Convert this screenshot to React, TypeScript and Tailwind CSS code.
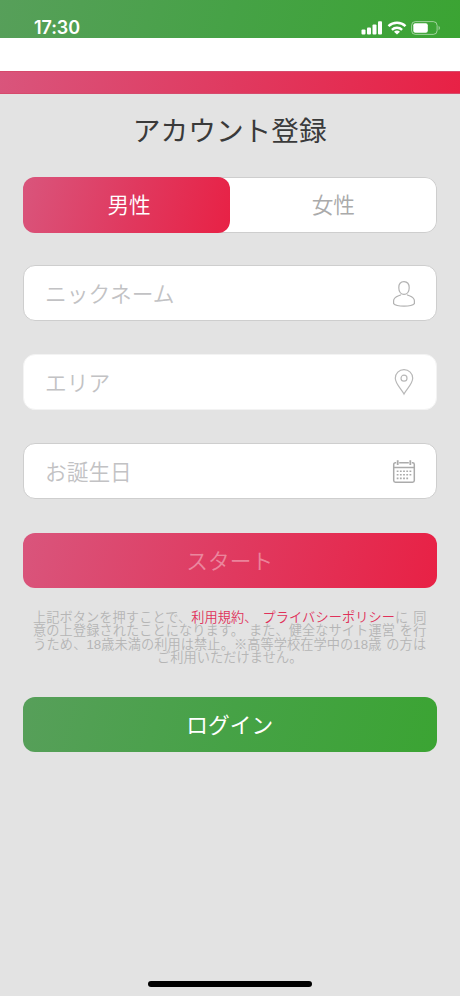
import { useState } from 'react'
import type { ReactNode } from 'react'
import clsx from 'clsx'

const pinkGradient = 'bg-[linear-gradient(105deg,#d9557c_0%,#e0395f_52%,#e82145_100%)]'
const greenGradient = 'bg-[linear-gradient(105deg,#579f5a_0%,#46a246_50%,#3ba433_100%)]'

function StatusBar() {
  return (
    <header className={clsx('flex h-[38px] justify-between pl-[34px] pr-[19px] text-white', greenGradient)}>
      <span className="pt-[18px] font-['Inter'] text-[18px] font-semibold leading-[20px] tracking-[-0.1px]">17:30</span>
      <div className="flex items-start gap-1 pt-[21px]">
        <svg width="22" height="14" viewBox="0 0 22 14" fill="currentColor">
          <rect x="0.5" y="8.5" width="4" height="5" rx="1" />
          <rect x="6" y="6.5" width="4" height="7" rx="1" />
          <rect x="11.5" y="3.5" width="4" height="10" rx="1" />
          <rect x="17" y="0.3" width="4" height="13.2" rx="1" />
        </svg>
        <svg width="20" height="14" viewBox="0 0 20 14" fill="none" stroke="currentColor" strokeWidth="2.5">
          <path d="M1.5 5.2C6.2 0.7 13.8 0.7 18.5 5.2" />
          <path d="M4.9 8.8C7.8 6.1 12.2 6.1 15.1 8.8" />
          <path d="M10 13.5L7 10.7C8.7 9.2 11.3 9.2 13 10.7Z" fill="currentColor" stroke="none" />
        </svg>
        <svg width="30" height="14" viewBox="0 0 30 14">
          <rect x="0.6" y="0.6" width="25.5" height="12.8" rx="3.8" fill="none" stroke="#fff" strokeOpacity="0.5" />
          <rect x="2.3" y="2.2" width="14.5" height="9.6" rx="2" fill="#fff" />
          <path d="M27.6 4.8C29.3 5.6 29.3 8.4 27.6 9.2Z" fill="#fff" fillOpacity="0.55" />
        </svg>
      </div>
    </header>
  )
}

function UserIcon() {
  return (
    <svg className="mt-px" width="24" height="28" viewBox="0 0 24 28" fill="none" stroke="#b2b2b2" strokeWidth="1.2">
      <path d="M12 1.6C8.6 1.6 6.8 4.2 6.8 7.7C6.8 11.4 8.8 14.4 12 14.4C15.2 14.4 17.2 11.4 17.2 7.7C17.2 4.2 15.4 1.6 12 1.6Z" />
      <path d="M8.9 14.8C6.6 16.2 1.6 16.4 1.6 20.8V23.6C4.5 26.9 19.5 26.9 22.4 23.6V20.8C22.4 16.4 17.4 16.2 15.1 14.8" />
    </svg>
  )
}

function PinIcon() {
  return (
    <svg width="24" height="28" viewBox="0 0 24 28" fill="none" stroke="#b8b8b8" strokeWidth="1.2">
      <path d="M12 26C9.8 21.4 3.3 15.8 3.3 10.2C3.3 5.4 7.1 1.6 12 1.6C16.9 1.6 20.7 5.4 20.7 10.2C20.7 15.8 14.2 21.4 12 26Z" />
      <circle cx="12" cy="10.2" r="3" />
    </svg>
  )
}

function CalendarIcon() {
  return (
    <svg className="mt-px" width="24" height="28" viewBox="0 0 24 28" fill="none" stroke="#ababab" strokeWidth="1.5">
      <path d="M4.2 4.8H3.4C2.3 4.8 1.7 5.4 1.7 6.4V22.6C1.7 23.6 2.3 24.3 3.4 24.3H20.6C21.7 24.3 22.3 23.6 22.3 22.6V6.4C22.3 5.4 21.7 4.8 20.6 4.8H19.8M7.2 4.8H16.8M1.7 9.4H22.3" />
      <path d="M5.7 2.2V7M18.3 2.2V7" strokeWidth="1.8" />
      <path d="M4.7 13.2H20M4.7 16.8H20M4.7 20.4H17" strokeWidth="1.6" strokeDasharray="1.8 1.4" />
    </svg>
  )
}

const fields: { label: string; icon: ReactNode; border: string }[] = [
  { label: 'ニックネーム', icon: <UserIcon />, border: 'border-[#cecece]' },
  { label: 'エリア', icon: <PinIcon />, border: 'border-[#f3f3f3]' },
  { label: 'お誕生日', icon: <CalendarIcon />, border: 'border-[#cecece]' },
]

export default function App() {
  const [gender, setGender] = useState('男性')

  return (
    <div className="flex h-[996px] w-[460px] flex-col overflow-hidden bg-[#e3e3e3] font-['Noto_Sans_CJK_JP',sans-serif] font-[350]">
      <StatusBar />
      <div className="h-[33px] bg-white" />
      <div className={clsx('h-[23px] border-y border-[#d64a6c]', pinkGradient)} />

      <main className="flex flex-1 flex-col pl-[22.5px] pr-[23px]">
        <h1 className="mt-[15px] h-[40px] text-center text-[27.7px] font-normal leading-[40px] text-[#3a3a3a]">アカウント登録</h1>

        {/* Gender toggle */}
        <div className="mt-[28px] flex h-[56px] rounded-[12px] bg-white shadow-[inset_0_0_0_1px_#cecece]">
          {['男性', '女性'].map(g => (
            <button
              key={g}
              onClick={() => setGender(g)}
              className={clsx(
                'w-1/2 rounded-[12px] pb-px text-[21.7px] first:pl-[6px]',
                gender === g ? ['text-white', pinkGradient] : 'text-[#aaa]',
              )}
            >
              {g}
            </button>
          ))}
        </div>

        <div className="mt-[32px] flex flex-col gap-[33px]">
          {fields.map(f => (
            <label
              key={f.label}
              className={clsx('flex h-[56px] items-center justify-between rounded-[12px] border bg-white pl-[21.5px] pr-[20px]', f.border)}
            >
              <input
                placeholder={f.label}
                className="h-full w-[280px] bg-transparent pb-px text-[21.7px] text-[#333] outline-none placeholder:text-[#c2c2c4]"
              />
              {f.icon}
            </label>
          ))}
        </div>

        <button className={clsx('mt-[34px] h-[55px] shrink-0 rounded-[12px] pb-px text-[21.7px] text-white/40', pinkGradient)}>
          スタート
        </button>

        <p className="mt-[23px] whitespace-nowrap text-center font-['Liberation_Sans','Noto_Sans_CJK_JP',sans-serif] text-[13.2px] leading-[13.4px] tracking-[0.08px] text-[#b5b5b5] [word-spacing:1.2px]">
          上記ボタンを押すことで、<span className="text-[#e0315a]">利用規約、 プライバシーポリシー</span>に 同<br />
          意の上登録されたことになります。 また、健全なサイト運営 を行<br />
          うため、18歳未満の利用は禁止。※高等学校在学中の18歳 の方は<br />
          ご利用いただけません。
        </p>

        <button className={clsx('mt-[32px] h-[55px] shrink-0 rounded-[12px] text-[21.7px] font-normal text-white', greenGradient)}>
          ログイン
        </button>
      </main>

      <div className="mb-[9px] h-[6px] w-[164px] shrink-0 self-center rounded-full bg-black" />
    </div>
  )
}
